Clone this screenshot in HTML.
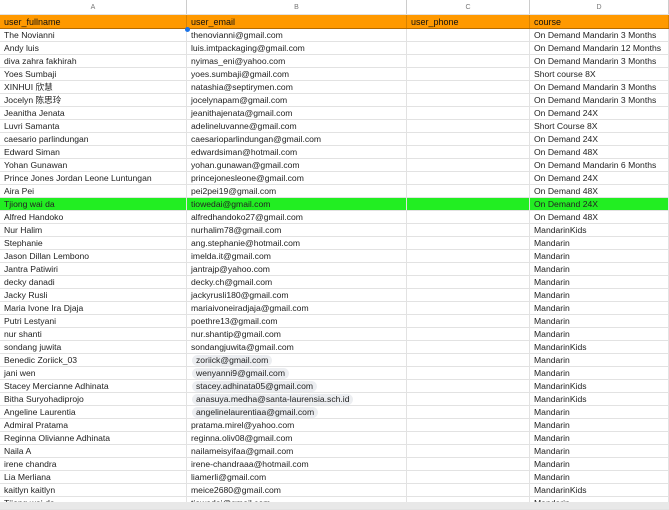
<!DOCTYPE html>
<html><head><meta charset="utf-8"><style>
body{margin:0;width:669px;height:509px;overflow:hidden;background:#fff;font-family:"Liberation Sans","Noto Sans CJK SC",sans-serif;font-size:8.6px;color:#222}
.r{display:flex;height:13px;line-height:13px;border-bottom:1px solid #e2e2e2;box-sizing:border-box;white-space:nowrap}
.r div{box-sizing:border-box;border-right:1px solid #e2e2e2;padding-left:4px;overflow:hidden}
.a{width:187px}.b{width:220px}.c{width:123px}.d{width:139px}
.top{height:15px;line-height:15px;color:#777;font-size:7px;background:#fff}
.top div{text-align:center;padding:0!important;border-right:1px solid #ccc}
.hd{background:#ff9900;height:14px;line-height:14px;font-size:9px;color:#111;border-bottom:1px solid #b46a00}
.hd div{border-right:1px solid #d98200}
.g{background:#22ee22}
.p{display:inline-block;background:#eceef1;border-radius:6px;padding:0 4px;line-height:11px;margin-left:1px}
.sb{position:absolute;left:0;top:502px;width:669px;height:7px;background:#e8e8e8}
</style></head><body>
<div class="r top"><div class="a">A</div><div class="b">B</div><div class="c">C</div><div class="d">D</div></div>
<div class="r hd"><div class="a">user_fullname</div><div class="b">user_email</div><div class="c">user_phone</div><div class="d">course</div></div>
<div class="r"><div class="a">The Novianni</div><div class="b">thenovianni@gmail.com</div><div class="c"></div><div class="d">On Demand Mandarin 3 Months</div></div>
<div class="r"><div class="a">Andy luis</div><div class="b">luis.imtpackaging@gmail.com</div><div class="c"></div><div class="d">On Demand Mandarin 12 Months</div></div>
<div class="r"><div class="a">diva zahra fakhirah</div><div class="b">nyimas_eni@yahoo.com</div><div class="c"></div><div class="d">On Demand Mandarin 3 Months</div></div>
<div class="r"><div class="a">Yoes Sumbaji</div><div class="b">yoes.sumbaji@gmail.com</div><div class="c"></div><div class="d">Short course 8X</div></div>
<div class="r"><div class="a">XINHUI 欣慧</div><div class="b">natashia@septirymen.com</div><div class="c"></div><div class="d">On Demand Mandarin 3 Months</div></div>
<div class="r"><div class="a">Jocelyn 陈思玲</div><div class="b">jocelynapam@gmail.com</div><div class="c"></div><div class="d">On Demand Mandarin 3 Months</div></div>
<div class="r"><div class="a">Jeanitha Jenata</div><div class="b">jeanithajenata@gmail.com</div><div class="c"></div><div class="d">On Demand 24X</div></div>
<div class="r"><div class="a">Luvri Samanta</div><div class="b">adelineluvanne@gmail.com</div><div class="c"></div><div class="d">Short Course 8X</div></div>
<div class="r"><div class="a">caesario parlindungan</div><div class="b">caesarioparlindungan@gmail.com</div><div class="c"></div><div class="d">On Demand 24X</div></div>
<div class="r"><div class="a">Edward Siman</div><div class="b">edwardsiman@hotmail.com</div><div class="c"></div><div class="d">On Demand 48X</div></div>
<div class="r"><div class="a">Yohan Gunawan</div><div class="b">yohan.gunawan@gmail.com</div><div class="c"></div><div class="d">On Demand Mandarin 6 Months</div></div>
<div class="r"><div class="a">Prince Jones Jordan Leone Luntungan</div><div class="b">princejonesleone@gmail.com</div><div class="c"></div><div class="d">On Demand 24X</div></div>
<div class="r"><div class="a">Aira Pei</div><div class="b">pei2pei19@gmail.com</div><div class="c"></div><div class="d">On Demand 48X</div></div>
<div class="r g"><div class="a">Tjiong wai da</div><div class="b">tiowedai@gmail.com</div><div class="c"></div><div class="d">On Demand 24X</div></div>
<div class="r"><div class="a">Alfred Handoko</div><div class="b">alfredhandoko27@gmail.com</div><div class="c"></div><div class="d">On Demand 48X</div></div>
<div class="r"><div class="a">Nur Halim</div><div class="b">nurhalim78@gmail.com</div><div class="c"></div><div class="d">MandarinKids</div></div>
<div class="r"><div class="a">Stephanie</div><div class="b">ang.stephanie@hotmail.com</div><div class="c"></div><div class="d">Mandarin</div></div>
<div class="r"><div class="a">Jason Dillan Lembono</div><div class="b">imelda.it@gmail.com</div><div class="c"></div><div class="d">Mandarin</div></div>
<div class="r"><div class="a">Jantra Patiwiri</div><div class="b">jantrajp@yahoo.com</div><div class="c"></div><div class="d">Mandarin</div></div>
<div class="r"><div class="a">decky danadi</div><div class="b">decky.ch@gmail.com</div><div class="c"></div><div class="d">Mandarin</div></div>
<div class="r"><div class="a">Jacky Rusli</div><div class="b">jackyrusli180@gmail.com</div><div class="c"></div><div class="d">Mandarin</div></div>
<div class="r"><div class="a">Maria Ivone Ira Djaja</div><div class="b">mariaivoneiradjaja@gmail.com</div><div class="c"></div><div class="d">Mandarin</div></div>
<div class="r"><div class="a">Putri Lestyani</div><div class="b">poethre13@gmail.com</div><div class="c"></div><div class="d">Mandarin</div></div>
<div class="r"><div class="a">nur shanti</div><div class="b">nur.shantip@gmail.com</div><div class="c"></div><div class="d">Mandarin</div></div>
<div class="r"><div class="a">sondang juwita</div><div class="b">sondangjuwita@gmail.com</div><div class="c"></div><div class="d">MandarinKids</div></div>
<div class="r"><div class="a">Benedic Zoriick_03</div><div class="b"><span class="p">zoriick@gmail.com</span></div><div class="c"></div><div class="d">Mandarin</div></div>
<div class="r"><div class="a">jani wen</div><div class="b"><span class="p">wenyanni9@gmail.com</span></div><div class="c"></div><div class="d">Mandarin</div></div>
<div class="r"><div class="a">Stacey Mercianne Adhinata</div><div class="b"><span class="p">stacey.adhinata05@gmail.com</span></div><div class="c"></div><div class="d">MandarinKids</div></div>
<div class="r"><div class="a">Bitha Suryohadiprojo</div><div class="b"><span class="p">anasuya.medha@santa-laurensia.sch.id</span></div><div class="c"></div><div class="d">MandarinKids</div></div>
<div class="r"><div class="a">Angeline Laurentia</div><div class="b"><span class="p">angelinelaurentiaa@gmail.com</span></div><div class="c"></div><div class="d">Mandarin</div></div>
<div class="r"><div class="a">Admiral Pratama</div><div class="b">pratama.mirel@yahoo.com</div><div class="c"></div><div class="d">Mandarin</div></div>
<div class="r"><div class="a">Reginna Olivianne Adhinata</div><div class="b">reginna.oliv08@gmail.com</div><div class="c"></div><div class="d">Mandarin</div></div>
<div class="r"><div class="a">Naila A</div><div class="b">nailameisyifaa@gmail.com</div><div class="c"></div><div class="d">Mandarin</div></div>
<div class="r"><div class="a">irene chandra</div><div class="b">irene-chandraaa@hotmail.com</div><div class="c"></div><div class="d">Mandarin</div></div>
<div class="r"><div class="a">Lia Merliana</div><div class="b">liamerli@gmail.com</div><div class="c"></div><div class="d">Mandarin</div></div>
<div class="r"><div class="a">kaitlyn kaitlyn</div><div class="b">meice2680@gmail.com</div><div class="c"></div><div class="d">MandarinKids</div></div>
<div class="r"><div class="a">Tjiong wai da</div><div class="b">tiowedai@gmail.com</div><div class="c"></div><div class="d">Mandarin</div></div>
<div style="position:absolute;left:185px;top:27px;width:5px;height:5px;border-radius:50%;background:#1a73e8"></div>
<div class="sb"></div>
</body></html>
